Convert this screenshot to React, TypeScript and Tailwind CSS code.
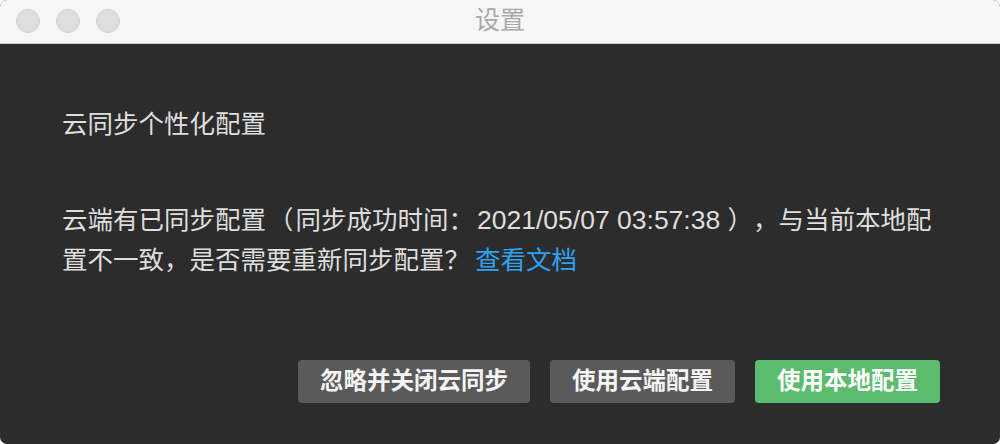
import React from "react";

const font = '"Liberation Sans", "Noto Sans CJK SC", sans-serif';

export default function App() {
  return (
    <div className="w-[1000px] h-[444px] bg-white">
      <div
        className="w-full h-full rounded-[7px] overflow-hidden flex flex-col bg-[#2c2c2c] [text-spacing-trim:space-all]"
        style={{ fontFamily: font }}
      >
        <div className="relative h-[44px] shrink-0 bg-[#f6f6f6] border-b border-[#c9c9c9] flex items-center">
          <div className="flex items-center gap-[16px] pl-[16px] pb-[1px]">
            <span className="w-[24px] h-[24px] rounded-full bg-[#dedede] border border-[#d2d2d2]" />
            <span className="w-[24px] h-[24px] rounded-full bg-[#dedede] border border-[#d2d2d2]" />
            <span className="w-[24px] h-[24px] rounded-full bg-[#dedede] border border-[#d2d2d2]" />
          </div>
          <div className="absolute inset-0 flex items-center justify-center text-[25px] text-[#a9a9a9] pb-[1px]">
            设置
          </div>
        </div>
        <div className="flex-1 flex flex-col pl-[62px] pr-[60px] pt-[60px] pb-[41px]">
          <div className="text-[25.5px] leading-[40px] text-[#dedede]">云同步个性化配置</div>
          <p className="mt-[56px] mr-[-14px] text-[25.5px] leading-[40px] text-[#dedede] [text-spacing-trim:space-all]">
            云端有已同步配置<span className="mx-[2px]">（</span>同步成功时间：<span className="ml-[3px] text-[26.5px]">2021/05/07 03:57:38 </span>），与当前本地配置不一致，是否需要重新同步配置？
            <span className="ml-[5px] text-[#2ea3f6]">查看文档</span>
          </p>
          <div className="mt-auto flex justify-end gap-[20px]">
            <button className="h-[43px] px-[22px] rounded-[4px] bg-[#5a5a5a] text-[#f4f4f4] text-[23.5px] font-bold">
              忽略并关闭云同步
            </button>
            <button className="h-[43px] px-[22px] rounded-[4px] bg-[#5a5a5a] text-[#f4f4f4] text-[23.5px] font-bold">
              使用云端配置
            </button>
            <button className="h-[43px] px-[22px] rounded-[4px] bg-[#5bbb6f] text-white text-[23.5px] font-bold">
              使用本地配置
            </button>
          </div>
        </div>
      </div>
    </div>
  );
}
